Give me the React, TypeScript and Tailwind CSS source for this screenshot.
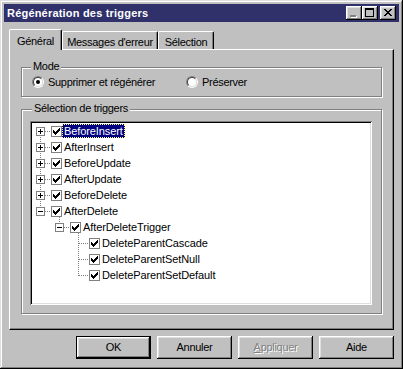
import React from "react";

const FONT = "font-['Liberation_Sans',Arial,sans-serif]";

const raised =
  "shadow-[inset_-1px_-1px_#000,inset_1px_1px_#fff,inset_-2px_-2px_#808080,inset_2px_2px_#dfdfdf]";

const etched = "border border-[#808080] shadow-[inset_1px_1px_#fff,1px_1px_#fff]";

type Row = { label: string; level: 0 | 1 | 2; exp?: "+" | "-"; sel?: boolean };

const rows: Row[] = [
  { label: "BeforeInsert", level: 0, exp: "+", sel: true },
  { label: "AfterInsert", level: 0, exp: "+" },
  { label: "BeforeUpdate", level: 0, exp: "+" },
  { label: "AfterUpdate", level: 0, exp: "+" },
  { label: "BeforeDelete", level: 0, exp: "+" },
  { label: "AfterDelete", level: 0, exp: "-" },
  { label: "AfterDeleteTrigger", level: 1, exp: "-" },
  { label: "DeleteParentCascade", level: 2 },
  { label: "DeleteParentSetNull", level: 2 },
  { label: "DeleteParentSetDefault", level: 2 },
];

const indent = { 0: "pl-[4px]", 1: "pl-[23px]", 2: "pl-[56px]" };

// pixel check mark, 7x7
const checkTops = [2, 3, 4, 3, 2, 1, 0];

function Expander({ sign }: { sign: "+" | "-" }) {
  return (
    <svg width="9" height="9" className="mt-[4px] mr-[5px] shrink-0">
      <rect x="0.5" y="0.5" width="8" height="8" fill="#fff" stroke="#808080" />
      <rect x="2" y="4" width="5" height="1" fill="#000" />
      {sign === "+" && <rect x="4" y="2" width="1" height="5" fill="#000" />}
    </svg>
  );
}

function TreeCheck() {
  return (
    <svg width="13" height="13" className="mt-[2px] shrink-0" shapeRendering="crispEdges">
      <rect x="1.5" y="1.5" width="10" height="10" fill="#fff" stroke="#808080" />
      {checkTops.map((t, c) => (
        <rect key={c} x={3 + c} y={3 + t} width="1" height="3" fill="#000" />
      ))}
    </svg>
  );
}

function TreeLines() {
  const p = { stroke: "#808080", strokeDasharray: "1 1", strokeWidth: 1 };
  return (
    <svg
      width="338"
      height="180"
      className="absolute left-0 top-0 pointer-events-none"
      shapeRendering="crispEdges"
    >
      <line x1="8.5" y1="8" x2="8.5" y2="89" {...p} />
      {[0, 1, 2, 3, 4, 5].map((i) => (
        <line key={i} x1="13" y1={16 * i + 8.5} x2="19" y2={16 * i + 8.5} {...p} />
      ))}
      <line x1="27.5" y1="90" x2="27.5" y2="105" {...p} />
      <line x1="32" y1="104.5" x2="38" y2="104.5" {...p} />
      <line x1="46.5" y1="104" x2="46.5" y2="153" {...p} />
      {[7, 8, 9].map((i) => (
        <line key={i} x1="47" y1={16 * i + 8.5} x2="57" y2={16 * i + 8.5} {...p} />
      ))}
    </svg>
  );
}

function Radio({ checked }: { checked?: boolean }) {
  return (
    <div className="w-[12px] h-[12px] rounded-full border border-[#808080] border-r-white border-b-white shrink-0">
      <div className="w-full h-full rounded-full border border-[#404040] border-r-[#dfdfdf] border-b-[#dfdfdf] bg-white flex items-center justify-center">
        {checked && <div className="w-[4px] h-[4px] rounded-full bg-black" />}
      </div>
    </div>
  );
}

function TitleBtn({ children, className = "" }: { children: React.ReactNode; className?: string }) {
  return (
    <div className={`w-[16px] h-[14px] bg-[#c0c0c0] ${raised} ${className}`}>
      <svg width="16" height="14" shapeRendering="crispEdges">
        {children}
      </svg>
    </div>
  );
}

const closeRows = ["xx....xx", ".xx..xx.", "..xxxx..", "...xx...", "..xxxx..", ".xx..xx.", "xx....xx"];

function Button({ children, def }: { children: React.ReactNode; def?: boolean }) {
  return (
    <div
      className={`w-[75px] h-[23px] flex items-center justify-center ${
        def ? "border border-black" : ""
      }`}
    >
      <div className={`w-full h-full flex items-center justify-center ${raised}`}>{children}</div>
    </div>
  );
}

export default function App() {
  return (
    <div
      className={`w-[403px] h-[369px] bg-[#c0c0c0] p-[4px] ${FONT} text-[11px] tracking-[-0.3px] text-black select-none shadow-[inset_-1px_-1px_#000,inset_1px_1px_#dfdfdf,inset_-2px_-2px_#808080,inset_2px_2px_#fff]`}
    >
      {/* title bar */}
      <div className="h-[18px] bg-[#30306a] flex items-center pl-[3px] pr-[3px]">
        <span className="flex-1 text-white font-bold text-[11px] tracking-[0.2px]">
          Régénération des triggers
        </span>
        <TitleBtn>
          <rect x="5" y="10" width="6" height="2" fill="#fff" />
          <rect x="4" y="9" width="6" height="2" fill="#808080" />
        </TitleBtn>
        <TitleBtn>
          <rect x="3" y="2" width="9" height="2" fill="#000" />
          <rect x="3" y="2" width="1" height="9" fill="#000" />
          <rect x="11" y="2" width="1" height="9" fill="#000" />
          <rect x="3" y="10" width="9" height="1" fill="#000" />
        </TitleBtn>
        <TitleBtn className="ml-[2px]">
          {closeRows.map((r, y) =>
            r.split("").map((ch, x) =>
              ch === "x" ? <rect key={`${x}-${y}`} x={4 + x} y={3 + y} width="1" height="1" fill="#000" /> : null,
            ),
          )}
        </TitleBtn>
      </div>

      <div className="px-[5px] pt-[7px]">
        {/* tabs */}
        <div className="flex items-start h-[20px]">
          <div className="relative z-10 w-[53px] h-[21px] bg-[#c0c0c0] border-l border-t border-white border-r border-r-black rounded-tl-[2px] rounded-tr-[2px] shadow-[inset_-1px_0_#808080] flex justify-center pt-[3px]">
            Général
          </div>
          <div className="mt-[2px] w-[96px] h-[18px] border-l border-t border-white border-r border-r-black rounded-tl-[2px] rounded-tr-[2px] shadow-[inset_-1px_0_#808080] flex justify-center pt-[2px]">
            Messages d'erreur
          </div>
          <div className="mt-[2px] w-[56px] h-[18px] border-l border-t border-white border-r border-r-black rounded-tl-[2px] rounded-tr-[2px] shadow-[inset_-1px_0_#808080] flex justify-center pt-[2px]">
            Sélection
          </div>
        </div>

        {/* panel */}
        <div className="h-[281px] border border-white border-r-black border-b-black shadow-[inset_-1px_-1px_#808080] px-[11px]">
          <div className={`relative mt-[17px] h-[30px] ${etched}`}>
            <span className="absolute left-[9px] top-[-8px] px-[2px] bg-[#c0c0c0] leading-[13px]">Mode</span>
            <div className="flex items-center h-full">
              <div className="ml-[10px] w-[154px] flex items-center">
                <Radio checked />
                <span className="ml-[4px]">Supprimer et régénérer</span>
              </div>
              <div className="flex items-center">
                <Radio />
                <span className="ml-[4px]">Préserver</span>
              </div>
            </div>
          </div>

          <div className={`relative mt-[12px] h-[205px] ${etched}`}>
            <span className="absolute left-[10px] top-[-8px] px-[2px] bg-[#c0c0c0] leading-[13px]">
              Sélection de triggers
            </span>
            <div className="ml-[8px] mt-[11px] w-[342px] h-[184px] bg-white p-[2px] shadow-[inset_1px_1px_#808080,inset_-1px_-1px_#fff,inset_2px_2px_#000,inset_-2px_-2px_#dfdfdf]">
              <div className="relative tracking-[-0.1px]">
                <TreeLines />
                {rows.map((r) => (
                  <div key={r.label} className={`relative flex items-start h-[16px] ${indent[r.level]}`}>
                    {r.exp && <Expander sign={r.exp} />}
                    <TreeCheck />
                    <span
                      className={`ml-[-1px] mt-[1px] h-[14px] px-[1px] leading-[12px] border ${
                        r.sel
                          ? "bg-[#000080] text-white border-dotted border-[#ffff80]"
                          : "border-transparent"
                      }`}
                    >
                      {r.label}
                    </span>
                  </div>
                ))}
              </div>
            </div>
          </div>
        </div>

        {/* buttons */}
        <div className="flex justify-end gap-[6px] mt-[6px]">
          <Button def>OK</Button>
          <Button>Annuler</Button>
          <Button>
            <span className="text-[#808080] [text-shadow:1px_1px_0_#fff]">
              <span className="underline">A</span>ppliquer
            </span>
          </Button>
          <Button>Aide</Button>
        </div>
      </div>
    </div>
  );
}
